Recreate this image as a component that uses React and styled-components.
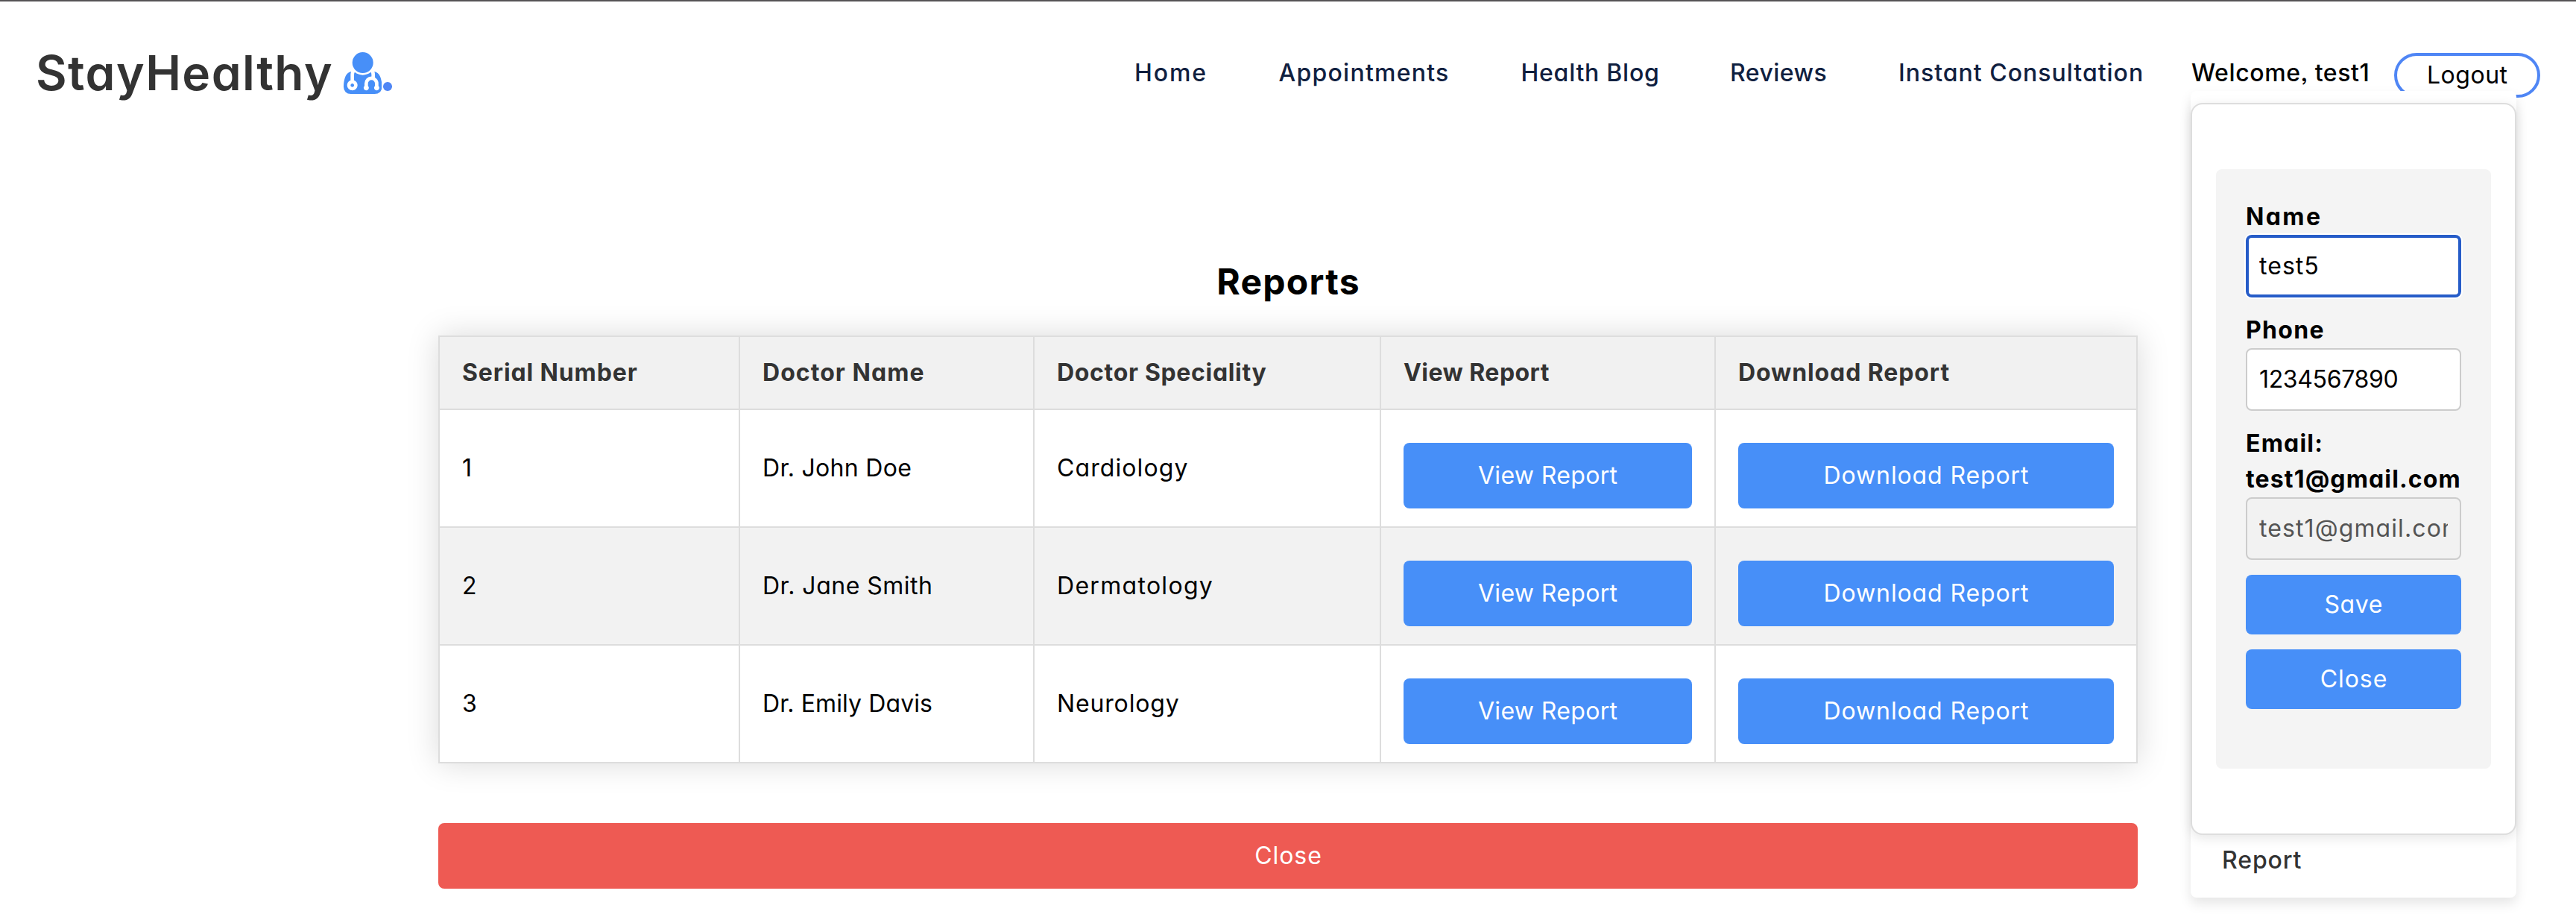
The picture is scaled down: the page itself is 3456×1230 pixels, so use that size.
import React from "react";
import styled, { createGlobalStyle } from "styled-components";

const GlobalStyle = createGlobalStyle`
  *, *::before, *::after { box-sizing: border-box; }
  body {
    margin: 0;
    background: #fff;
    color: #000;
    font-family: Inter, "Open Sans", sans-serif;
    font-size: 32px;
    font-feature-settings: "cv11", "ss03";
  }
  button, input { font: inherit; font-feature-settings: inherit; margin: 0; }
`;

const colors = {
  blue: "#478ff8",
  outline: "#4f86f5",
  red: "#ee5a53",
  focus: "#265cc8",
  line: "#ddd",
};

const Page = styled.div`
  min-height: 1230px;
  border-top: 2px solid #555355;
`;

/* Letter-spaced text whose trailing gap does not count towards its width. */
const Text = styled.span`
  letter-spacing: ${(p) => p.$ls}px;
  margin-right: ${(p) => -p.$ls}px;
  white-space: nowrap;
`;

const Header = styled.header`
  position: relative;
  display: flex;
  align-items: center;
  justify-content: space-between;
  height: 191px;
  padding: 0 48px;
`;

const Logo = styled.div`
  display: flex;
  align-items: center;
  gap: 15px;
  color: #333;
  font-size: 64px;
  font-weight: 600;
`;

const LogoMark = styled.span`
  display: flex;
  align-items: flex-end;
  height: 56px;
`;

const DoctorIcon = styled.svg`
  width: 51.4px;
  height: 56px;
  fill: ${colors.blue};
`;

const LogoDot = styled.span`
  width: 11.6px;
  height: 11.6px;
  margin: 0 0 4px 2px;
  border-radius: 50%;
  background: ${colors.outline};
`;

const Nav = styled.nav`
  display: grid;
  grid-template-columns: 193.5px 325px 280.5px 226px 393px 272px 196px;
  align-items: center;
`;

const NavLink = styled.a`
  color: ${(p) => (p.$plain ? "#000" : "#10203f")};
  font-weight: 500;
`;

const LogoutButton = styled.button`
  display: flex;
  align-items: center;
  justify-content: center;
  height: 60px;
  margin-top: 6px;
  padding: 0 0 1px;
  border: 4px solid ${colors.outline};
  border-radius: 30px;
  background: transparent;
  color: #000;
`;

const Dropdown = styled.div`
  position: absolute;
  z-index: 2;
  top: 120px;
  right: 80px;
  width: 437px;
  height: 1082px;
  padding-top: 16px;
  border-radius: 8px;
  background: #fff;
  box-shadow: 0 8px 16px rgba(0, 0, 0, 0.1);
`;

const ProfileCard = styled.div`
  height: 982px;
  padding: 87px 32px;
  border: 2px solid ${colors.line};
  border-radius: 16px;
  background: #fff;
  box-shadow: 0 4px 16px rgba(0, 0, 0, 0.1);
`;

const ProfileForm = styled.form`
  display: flex;
  flex-direction: column;
  gap: 20px;
  height: 804px;
  padding: 40px;
  border-radius: 8px;
  background: #f4f4f4;
`;

const Field = styled.label`
  display: flex;
  flex-direction: column;
  align-items: flex-start;
  font-weight: 700;
  line-height: 48px;
`;

const Input = styled.input`
  width: 100%;
  height: 84px;
  padding: 0 ${(p) => (p.$active ? 14 : 16)}px 2px;
  border: ${(p) => (p.$active ? `4px solid ${colors.focus}` : "2px solid #ccc")};
  border-radius: 8px;
  outline: none;
  background: ${(p) => (p.disabled ? "#f2f2f2" : "#fff")};
  box-shadow: ${(p) => (p.$active ? "0 0 0 2px #fff" : "none")};
  color: ${(p) => (p.disabled ? "#545454" : "#000")};
  font-weight: 400;
  letter-spacing: ${(p) => p.$ls}px;
`;

const Button = styled.button`
  display: flex;
  align-items: center;
  justify-content: center;
  width: 100%;
  height: ${(p) => p.$height || 88}px;
  margin-top: ${(p) => p.$top || 0}px;
  padding: 0 0 2px;
  border: 0;
  border-radius: 8px;
  background: ${(p) => (p.$danger ? colors.red : colors.blue)};
  color: #fff;
`;

const MenuItem = styled.a`
  display: block;
  padding: 10px 42px;
  color: #333;
  font-weight: 500;
  line-height: 48px;
`;

const Main = styled.main`
  width: 2280px;
  margin: 0 auto;
  padding-top: 149px;
`;

const Title = styled.h1`
  margin: 0 0 36px;
  font-size: 48px;
  font-weight: 700;
  line-height: 72px;
  text-align: center;
`;

const Table = styled.table`
  width: 100%;
  margin-bottom: 80px;
  border-collapse: collapse;
  table-layout: fixed;
  box-shadow: 0 0 40px rgba(0, 0, 0, 0.15);
`;

const Col = styled.col`
  width: ${(p) => p.$w}px;
`;

const HeadCell = styled.th`
  height: 98px;
  padding: 0 30px 2px;
  border: 2px solid ${colors.line};
  background: #f1f1f1;
  color: #333;
  font-weight: 700;
  text-align: left;
`;

const Row = styled.tr`
  background: ${(p) => (p.$striped ? "#f2f2f2" : "#fff")};
`;

const Cell = styled.td`
  height: 158px;
  padding: 0 30px 2px;
  border: 2px solid ${colors.line};
`;

const links = [
  ["Home", 1.9],
  ["Appointments", 1.25],
  ["Health Blog", 0.74],
  ["Reviews", 0.45],
  ["Instant Consultation", 1],
];

const columns = [
  ["Serial Number", 403, 0.88],
  ["Doctor Name", 395, 1.05],
  ["Doctor Speciality", 465, 0.67],
  ["View Report", 449, 0.46],
  ["Download Report", 566, 0.9],
];

const reports = [
  { doctor: ["Dr. John Doe", 0.3], speciality: ["Cardiology", 1.1] },
  { doctor: ["Dr. Jane Smith", 0.5], speciality: ["Dermatology", 1.3] },
  { doctor: ["Dr. Emily Davis", 0.1], speciality: ["Neurology", 0.85] },
];

function Doctor() {
  return (
    <DoctorIcon viewBox="192 128 1408 1532" aria-hidden="true">
      <path d="M576 1344q0 26-19 45t-45 19-45-19-19-45 19-45 45-19 45 19 19 45zm1024 57q0 121-73 190t-194 69h-874q-121 0-194-69t-73-190q0-68 5.5-131t24-138 47.5-132.5 81-103 120-60.5q-22 52-22 120v203q-58 20-93 70t-35 111q0 80 56 136t136 56 136-56 56-136q0-61-35.5-111t-92.5-70v-203q0-62 25-93 132 104 295 104t295-104q25 31 25 93v64q-106 0-181 75t-75 181v89q-32 29-32 71 0 40 28 68t68 28 68-28 28-68q0-42-32-71v-89q0-52 38-90t90-38 90 38 38 90v89q-32 29-32 71 0 40 28 68t68 28 68-28 28-68q0-42-32-71v-89q0-68-34.5-127.5t-93.5-93.5q0-10 .5-42.5t0-48-2.5-41.5-7-47-13-40q68 15 120 60.5t81 103 47.5 132.5 24 138 5.5 131zm-320-889q0 159-112.5 271.5t-271.5 112.5-271.5-112.5-112.5-271.5 112.5-271.5 271.5-112.5 271.5 112.5 112.5 271.5z" />
    </DoctorIcon>
  );
}

function ProfileMenu() {
  return (
    <Dropdown>
      <ProfileCard>
        <ProfileForm>
          <Field>
            <Text $ls={2.4}>Name</Text>
            <Input $active $ls={1.05} defaultValue="test5" />
          </Field>
          <Field>
            <Text $ls={1.3}>Phone</Text>
            <Input $ls={-0.35} defaultValue="1234567890" />
          </Field>
          <Field>
            <Text $ls={1.2}>Email:</Text>
            <Text $ls={1.15}>test1@gmail.com</Text>
            <Input $ls={1.1} disabled defaultValue="test1@gmail.com" />
          </Field>
          <Button type="button" $height={80}>
            <Text $ls={0.65}>Save</Text>
          </Button>
          <Button type="button" $height={80}>
            <Text $ls={0.95}>Close</Text>
          </Button>
        </ProfileForm>
      </ProfileCard>
      <MenuItem>
        <Text $ls={0.9}>Report</Text>
      </MenuItem>
    </Dropdown>
  );
}

export default function App() {
  return (
    <>
      <GlobalStyle />
      <Page>
        <Header>
          <Logo>
            <Text $ls={1.45}>StayHealthy</Text>
            <LogoMark>
              <Doctor />
              <LogoDot />
            </LogoMark>
          </Logo>
          <Nav>
            {links.map(([label, ls]) => (
              <NavLink key={label}>
                <Text $ls={ls}>{label}</Text>
              </NavLink>
            ))}
            <NavLink $plain>
              <Text $ls={0.6}>Welcome, test1</Text>
            </NavLink>
            <LogoutButton>
              <Text $ls={0.54}>Logout</Text>
            </LogoutButton>
          </Nav>
          <ProfileMenu />
        </Header>
        <Main>
          <Title>
            <Text $ls={1.25}>Reports</Text>
          </Title>
          <Table>
            <colgroup>
              {columns.map(([label, width]) => (
                <Col key={label} $w={width} />
              ))}
            </colgroup>
            <thead>
              <tr>
                {columns.map(([label, , ls]) => (
                  <HeadCell key={label}>
                    <Text $ls={ls}>{label}</Text>
                  </HeadCell>
                ))}
              </tr>
            </thead>
            <tbody>
              {reports.map(({ doctor, speciality }, i) => (
                <Row key={doctor[0]} $striped={i % 2 === 1}>
                  <Cell>{i + 1}</Cell>
                  <Cell>
                    <Text $ls={doctor[1]}>{doctor[0]}</Text>
                  </Cell>
                  <Cell>
                    <Text $ls={speciality[1]}>{speciality[0]}</Text>
                  </Cell>
                  <Cell>
                    <Button $top={22}>
                      <Text $ls={0.35}>View Report</Text>
                    </Button>
                  </Cell>
                  <Cell>
                    <Button $top={22}>
                      <Text $ls={0.88}>Download Report</Text>
                    </Button>
                  </Cell>
                </Row>
              ))}
            </tbody>
          </Table>
          <Button $danger>
            <Text $ls={0.95}>Close</Text>
          </Button>
        </Main>
      </Page>
    </>
  );
}
